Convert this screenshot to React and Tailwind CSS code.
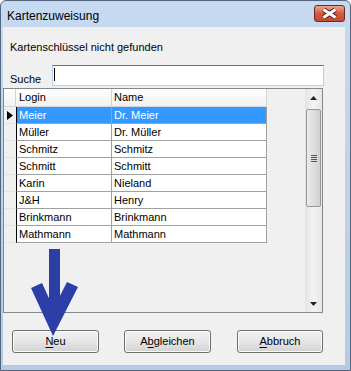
import React from 'react';

const rows = [
  ['Meier', 'Dr. Meier'],
  ['Müller', 'Dr. Müller'],
  ['Schmitz', 'Schmitz'],
  ['Schmitt', 'Schmitt'],
  ['Karin', 'Nieland'],
  ['J&H', 'Henry'],
  ['Brinkmann', 'Brinkmann'],
  ['Mathmann', 'Mathmann'],
];

// Label with one underlined access-key letter
function Mnemonic({ label, index }) {
  return (
    <>
      {label.slice(0, index)}
      <span className="underline underline-offset-[2px]">{label[index]}</span>
      {label.slice(index + 1)}
    </>
  );
}

function DialogButton({ children, className = '' }) {
  return (
    <button
      className={`h-[23px] rounded-[3px] border border-[#707070] bg-gradient-to-b from-[#f2f2f2] via-[#e6e6e6] to-[#d2d2d2] leading-[13px] text-black shadow-[inset_0_0_0_1px_#fbfbfb] ${className}`}
    >
      {children}
    </button>
  );
}

function CloseButton() {
  return (
    <div className="h-[17px] w-[31px] overflow-hidden rounded-[3px] border border-[#6b2a1e] bg-gradient-to-b from-[#e9a896] via-[#cf5a40] to-[#c74a2f]">
      <svg width="29" height="15" viewBox="0 0 29 15">
        <path d="M8.5 3.5 L20.5 11.5 M20.5 3.5 L8.5 11.5" stroke="#5c1c12" strokeWidth="5" />
        <path d="M8.5 3.5 L20.5 11.5 M20.5 3.5 L8.5 11.5" stroke="#ffffff" strokeWidth="3" />
      </svg>
    </div>
  );
}

function ScrollBar() {
  return (
    <div className="flex w-[17px] flex-col bg-gradient-to-r from-[#e3e3e3] via-[#f3f3f3] to-[#e6e6e6]">
      <div className="flex h-[17px] items-center justify-center">
        <svg width="7" height="4" viewBox="0 0 7 4">
          <path d="M0 4 L3.5 0 L7 4 Z" fill="#222" />
        </svg>
      </div>
      <div className="mx-[1px] mt-[3px] flex h-[98px] items-center justify-center rounded-[2px] border border-[#979797] bg-gradient-to-r from-[#ececec] via-[#dedede] to-[#d0d0d0]">
        <div className="flex flex-col gap-[1px]">
          <div className="h-px w-[6px] bg-[#555]" />
          <div className="h-px w-[6px] bg-[#555]" />
          <div className="h-px w-[6px] bg-[#555]" />
          <div className="h-px w-[6px] bg-[#555]" />
        </div>
      </div>
      <div className="flex-1" />
      <div className="flex h-[17px] items-center justify-center">
        <svg width="7" height="4" viewBox="0 0 7 4">
          <path d="M0 0 L3.5 4 L7 0 Z" fill="#222" />
        </svg>
      </div>
    </div>
  );
}

function DataGrid() {
  return (
    <div className="flex h-[225px] w-[320px] border border-[#828790] bg-[#f0f0f0]">
      <div className="flex flex-1 flex-col">
        {/* header */}
        <div className="flex h-[18px]">
          <div className="w-[12px] border-b border-r border-[#d5d5d5] bg-gradient-to-b from-white to-[#f1f1f1]" />
          <div className="flex w-[96px] items-center border-b border-r border-[#d5d5d5] bg-gradient-to-b from-white to-[#f1f1f1] pl-[3px]">
            Login
          </div>
          <div className="flex w-[155px] items-center border-b border-r border-[#d5d5d5] bg-gradient-to-b from-white to-[#f1f1f1] pl-[2px]">
            Name
          </div>
        </div>
        {rows.map(([login, name], i) => {
          const selected = i === 0;
          return (
            <div key={login} className="flex h-[17px]">
              <div className="flex w-[12px] items-center justify-center border-b border-[#e4e4e4]">
                {selected && (
                  <svg width="6" height="9" viewBox="0 0 6 9">
                    <path d="M0 0 L6 4.5 L0 9 Z" fill="#000" />
                  </svg>
                )}
              </div>
              <div
                className={`flex w-[96px] items-center border-b border-l border-r border-b-[#a0a0a0] border-l-black border-r-[#a0a0a0] pl-[2px] ${
                  selected ? 'bg-[#3399ff] text-white' : 'bg-white'
                }`}
              >
                {login}
              </div>
              <div
                className={`flex w-[155px] items-center border-b border-r border-[#a0a0a0] pl-[2px] ${
                  selected ? 'bg-[#3399ff] text-white' : 'bg-white'
                }`}
              >
                {name}
              </div>
            </div>
          );
        })}
      </div>
      <ScrollBar />
    </div>
  );
}

export default function App() {
  return (
    <div className="relative h-[371px] w-[351px] overflow-hidden font-['Liberation_Sans',Arial,sans-serif] text-[11px] text-black">
      <div className="flex h-full flex-col rounded-t-[6px] border border-[#54657d] bg-gradient-to-b from-[#c6daf1] to-[#b3cbe8]">
        {/* title bar */}
        <div className="flex h-[26px] items-start justify-between pl-[6px] pr-[5px]">
          <span className="mt-[8px] text-[12px] leading-[14px]">Kartenzuweisung</span>
          <div className="mt-[4px]">
            <CloseButton />
          </div>
        </div>

        {/* client */}
        <div className="flex flex-1 pb-[5px] pl-[2px] pr-[5px]">
          <div className="flex flex-1 flex-col bg-[#f0f0f0]">
            <div className="mt-[14px] pl-[7px] leading-[13px]">Kartenschlüssel nicht gefunden</div>

            <div className="mt-[11px] flex h-[21px]">
              <div className="w-[49px] self-end pl-[7px] leading-[13px]">Suche</div>
              <div className="flex w-[272px] border border-[#b3cfe8] border-t-[#3d7bad] bg-white">
                <div className="ml-px mt-[2px] h-[13px] w-px bg-black" />
              </div>
            </div>

            <div className="mt-[2px]">
              <DataGrid />
            </div>

            <div className="mt-[17px] flex pl-[9px]">
              <DialogButton className="w-[87px]">
                <Mnemonic label="Neu" index={0} />
              </DialogButton>
              <DialogButton className="ml-[25px] w-[87px]">
                <Mnemonic label="Abgleichen" index={1} />
              </DialogButton>
              <DialogButton className="ml-[26px] w-[86px]">
                <Mnemonic label="Abbruch" index={0} />
              </DialogButton>
            </div>
          </div>
        </div>
      </div>

      {/* annotation arrow */}
      <svg className="pointer-events-none absolute left-0 top-0" width="351" height="371" viewBox="0 0 351 371">
        <path
          d="M49 249 L60 249 L60 295.7 L67 282 L78 287 L53 336 L31 288 L42 283 L49 298.3 Z"
          fill="#2c3fa6"
        />
      </svg>
    </div>
  );
}
